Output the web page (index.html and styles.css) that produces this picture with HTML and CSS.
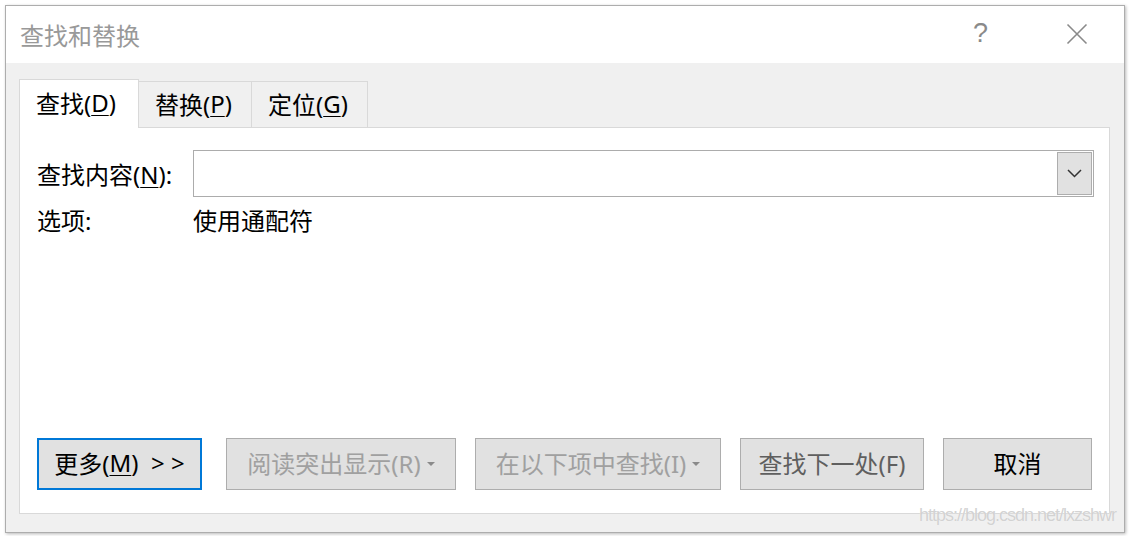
FILE: index.html
```html
<!DOCTYPE html>
<html lang="zh-CN">
<head>
<meta charset="utf-8">
<title>查找和替换</title>
<link rel="stylesheet" href="styles.css">
</head>
<body>
<div class="window">
  <div class="titlebar">
    <div class="title">查找和替换</div>
    <div class="title-actions">
      <span class="help">?</span>
      <svg class="close" width="22" height="22" viewBox="0 0 22 22"><path d="M1.5 1.5 L20.5 20.5 M20.5 1.5 L1.5 20.5" stroke="#8a8a8a" stroke-width="1.6" fill="none"/></svg>
    </div>
  </div>
  <div class="client">
    <div class="tabs">
      <div class="tab active">查找(<u>D</u>)</div>
      <div class="tab">替换(<u>P</u>)</div>
      <div class="tab">定位(<u>G</u>)</div>
    </div>
    <div class="panel">
      <div class="field-row">
        <label class="label">查找内容(<u>N</u>):</label>
        <div class="combo">
          <div class="combo-input"></div>
          <div class="combo-btn">
            <svg width="15" height="9" viewBox="0 0 15 9"><path d="M1 1 L7.5 7.5 L14 1" stroke="#333" stroke-width="1.5" fill="none"/></svg>
          </div>
        </div>
      </div>
      <div class="option-row">
        <span class="label">选项:</span>
        <span class="option-value">使用通配符</span>
      </div>
      <div class="buttons">
        <button class="btn btn-more default">更多(<u>M</u>)&nbsp; &gt;&nbsp;&gt;</button>
        <button class="btn btn-read disabled">阅读突出显示(R)<span class="caret"></span></button>
        <button class="btn btn-in disabled">在以下项中查找(I)<span class="caret"></span></button>
        <button class="btn btn-next muted">查找下一处(F)</button>
        <button class="btn btn-cancel">取消</button>
      </div>
    </div>
  </div>
</div>
<div class="watermark">https://blog.csdn.net/lxzshwr</div>
</body>
</html>
```

FILE: styles.css
```css
* { box-sizing: border-box; }
html, body {
  margin: 0;
  padding: 0;
  background: #ffffff;
  width: 1130px;
  height: 536px;
  overflow: hidden;
  font-family: "Noto Sans", "Noto Sans CJK SC", sans-serif;
}
u { text-decoration: underline; text-underline-offset: 3px; text-decoration-thickness: 1px; }

.window {
  margin: 5px 0 0 5px;
  width: 1120px;
  height: 528px;
  border: 1px solid #adadad;
  box-shadow: 1px 1px 3px rgba(0,0,0,0.28);
  display: flex;
  flex-direction: column;
  background: #f0f0f0;
}

.titlebar {
  height: 57px;
  background: #ffffff;
  display: flex;
  align-items: center;
  justify-content: space-between;
  padding-left: 14px;
}
.title {
  font-family: "Noto Sans CJK SC", sans-serif;
  font-size: 24px;
  color: #999999;
}
.title-actions {
  display: flex;
  align-items: center;
  height: 100%;
}
.help {
  font-family: "Liberation Sans", sans-serif;
  font-size: 27px;
  color: #8a8a8a;
  margin-right: 78px;
  margin-top: -2px;
}
.close {
  margin-right: 36px;
  margin-top: -1px;
}

.client {
  flex: 1;
  padding: 16px 14px 18px 13px;
  display: flex;
  flex-direction: column;
}

.tabs {
  display: flex;
  align-items: flex-end;
  height: 48px;
  position: relative;
  z-index: 1;
}
.tab {
  height: 46px;
  border: 1px solid #d9d9d9;
  border-bottom: none;
  background: #f0f0f0;
  font-size: 24px;
  color: #000;
  display: flex;
  align-items: center;
  padding: 0 0 3px 16px;
  margin-left: -1px;
}
.tab:first-child { margin-left: 0; }
.tab.active {
  height: 49px;
  margin-bottom: -1px;
  background: #ffffff;
  padding-bottom: 4px;
  width: 120px;
}
.tab:nth-child(2) { width: 114px; }
.tab:nth-child(3) { width: 117px; }

.panel {
  flex: 1;
  background: #ffffff;
  border: 1px solid #d9d9d9;
  padding: 22px 15px 23px 17px;
  display: flex;
  flex-direction: column;
}

.field-row {
  display: grid;
  grid-template-columns: 156px 1fr;
  align-items: center;
  height: 47px;
}
.label {
  font-size: 24px;
  color: #000;
}
.combo {
  height: 47px;
  border: 1px solid #acacac;
  display: flex;
  align-items: stretch;
  padding: 1px;
}
.combo-input { flex: 1; }
.combo-btn {
  width: 35px;
  background: #e1e1e1;
  border: 1px solid #adadad;
  display: flex;
  align-items: center;
  justify-content: center;
}

.option-row {
  display: grid;
  grid-template-columns: 156px 1fr;
  margin-top: 10px;
  line-height: 28px;
}
.option-value {
  font-size: 24px;
  color: #000;
}

.buttons {
  margin-top: auto;
  display: flex;
  gap: 19px;
  height: 52px;
}
.btn {
  height: 52px;
  background: #e1e1e1;
  border: 1px solid #adadad;
  font-family: "Noto Sans", "Noto Sans CJK SC", sans-serif;
  font-size: 24px;
  color: #000;
  padding: 0 0 3px 0;
  display: flex;
  align-items: center;
  justify-content: center;
  margin: 0;
}
.btn.default { border: 2px solid #0078d7; }
.btn.disabled { color: #a0a0a0; }
.btn.muted { color: #5f5f5f; }
.btn-more { width: 165px; margin-right: 5px; }
.btn-read { width: 230px; }
.btn-in { width: 246px; }
.btn-next { width: 184px; }
.btn-cancel { width: 149px; }
.caret {
  width: 0;
  height: 0;
  border-left: 4px solid transparent;
  border-right: 4px solid transparent;
  border-top: 4px solid #8a8a8a;
  margin-left: 6px;
  margin-top: 2px;
}

.watermark {
  position: absolute;
  left: 919px;
  top: 505px;
  font-family: "Liberation Sans", sans-serif;
  font-size: 18px;
  letter-spacing: -1px;
  color: rgba(205,205,205,0.9);
  text-shadow: 0 0 1px rgba(255,255,255,0.8);
}
```
